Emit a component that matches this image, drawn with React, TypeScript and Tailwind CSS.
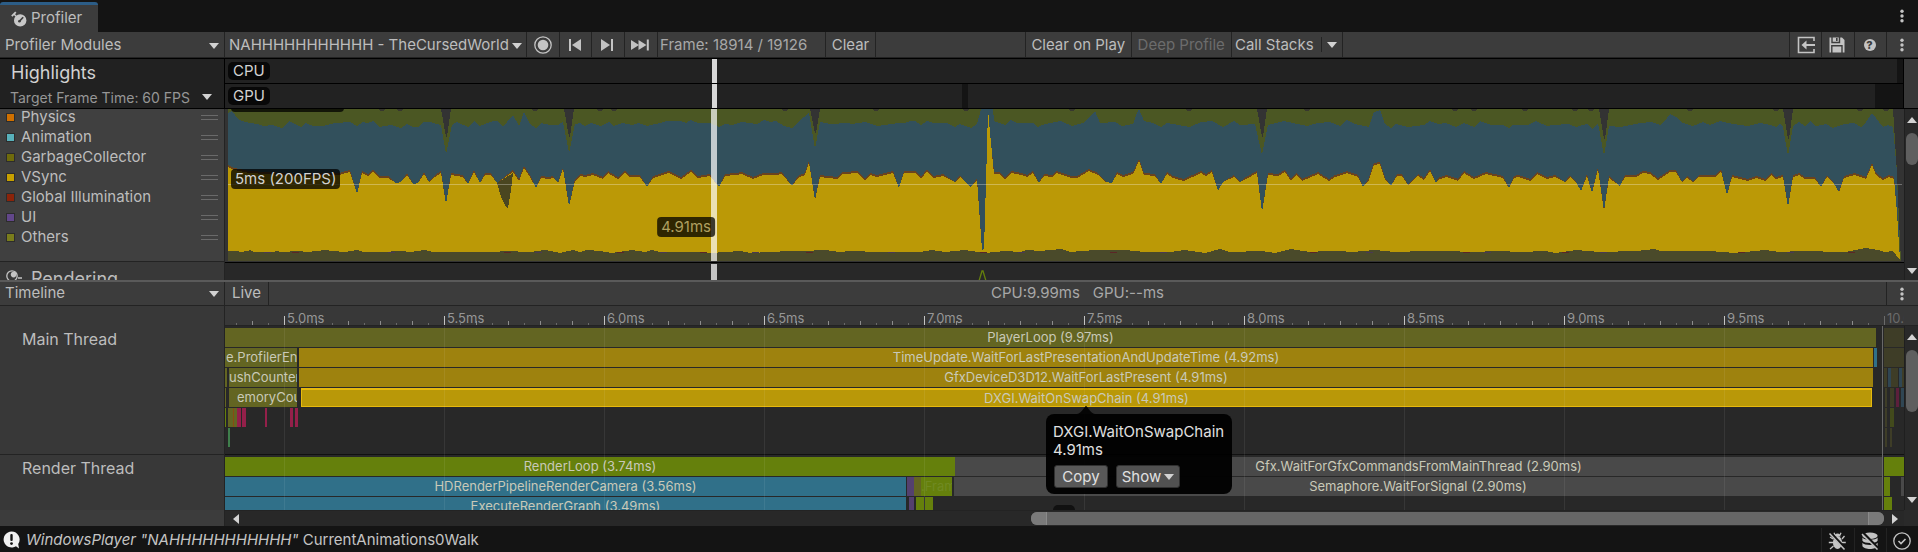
import { ReactNode } from "react";

// x,y pairs of the stacked chart, in chart units
const RENDER_LINE =
  "228,113 232,111 239,120 245,122 257,124 263,126 272,125 282,128 289,121 301,127 306,123 313,126 323,126 335,123 350,122 357,126 363,122 367,123 373,121 379,127 391,125 401,128 407,124 413,127 419,127 423,122 430,122 441,125 446,154 452,125 457,122 468,127 474,121 480,126 493,121 497,121 503,126 507,122 513,115 519,126 524,112 530,124 536,128 541,123 550,125 558,125 563,122 569,153 575,124 580,123 585,126 591,123 601,126 609,122 613,126 623,123 632,125 638,123 647,126 660,123 667,121 680,121 686,123 691,120 698,123 710,123 719,127 725,124 732,125 742,122 757,124 764,120 770,122 776,121 784,126 792,128 798,122 809,113 815,149 820,122 830,124 847,123 852,124 865,122 877,126 892,124 898,123 905,123 910,121 915,121 921,125 927,121 933,123 947,123 955,127 960,124 971,128 977,124 981,109 993,109 994,121 1005,125 1011,120 1017,123 1033,123 1038,127 1045,124 1061,121 1072,126 1083,123 1095,111 1100,123 1115,122 1122,126 1133,124 1137,113 1139,109 1144,121 1153,123 1161,127 1167,123 1190,127 1201,122 1212,121 1223,127 1234,121 1240,125 1255,124 1262,155 1268,125 1284,121 1307,126 1318,123 1330,122 1340,126 1347,120 1355,124 1369,127 1374,112 1380,110 1385,124 1391,128 1396,124 1408,127 1424,125 1430,121 1438,124 1446,123 1456,127 1464,123 1474,127 1480,121 1491,125 1503,125 1509,128 1513,125 1528,125 1536,121 1547,126 1553,125 1569,124 1576,127 1587,124 1592,129 1598,123 1604,156 1609,126 1620,127 1640,123 1651,122 1660,125 1665,121 1670,114 1676,117 1683,123 1693,126 1703,122 1710,125 1720,121 1733,124 1748,126 1760,123 1771,125 1776,127 1780,124 1783,127 1788,156 1793,126 1799,122 1805,126 1810,121 1816,126 1826,124 1833,128 1844,124 1854,123 1861,127 1866,122 1872,113 1883,127 1888,125 1893,127 1897,173 1899,240 1900,260";

const VSYNC_LINE =
  "228,167 234,170 250,173 300,176 339,175 350,172 357,194 362,173 368,176 373,172 379,178 388,178 396,183 401,182 407,175 413,184 418,183 424,174 429,182 435,177 441,173 446,204 451,175 463,177 468,184 474,172 480,183 485,175 491,175 497,183 513,172 519,181 524,168 530,177 536,188 541,178 548,179 553,178 558,183 563,169 569,206 575,181 580,176 585,177 593,175 603,179 608,173 618,179 625,173 630,177 640,177 647,187 653,178 669,173 681,179 691,172 698,178 710,176 719,187 725,176 735,175 742,174 753,179 763,175 775,175 782,174 792,186 798,178 805,175 809,163 815,200 820,177 837,179 843,174 858,173 865,181 870,175 877,177 893,173 899,188 904,173 915,173 921,179 927,171 933,178 943,176 955,182 960,177 967,184 971,187 977,180 982,250 984,249 987,147 988,109 990,133 994,174 999,174 1005,180 1011,173 1022,175 1027,177 1033,173 1039,183 1044,176 1052,177 1056,173 1072,178 1077,178 1089,171 1098,175 1106,182 1112,183 1117,174 1123,177 1133,174 1139,161 1144,175 1155,176 1161,184 1167,174 1173,178 1184,181 1201,173 1206,176 1212,172 1218,191 1223,182 1234,177 1240,182 1246,179 1257,173 1262,212 1268,175 1278,176 1285,172 1291,181 1296,175 1302,181 1318,174 1329,181 1335,177 1347,173 1358,177 1363,187 1369,180 1374,165 1380,164 1385,180 1391,186 1397,176 1402,176 1408,185 1418,176 1424,180 1430,171 1436,183 1438,180 1446,177 1458,181 1464,173 1474,179 1486,174 1503,178 1509,188 1514,178 1518,177 1530,181 1537,174 1547,179 1555,177 1565,182 1570,177 1576,182 1581,191 1587,176 1592,193 1598,169 1604,211 1609,178 1620,186 1625,177 1636,177 1643,173 1650,174 1658,180 1670,172 1676,172 1682,182 1687,178 1693,182 1699,177 1715,177 1721,171 1727,195 1732,177 1748,181 1756,178 1766,181 1771,175 1776,179 1783,177 1788,207 1793,177 1799,175 1805,179 1815,179 1821,187 1827,177 1833,182 1839,192 1844,178 1855,175 1866,179 1872,165 1876,175 1883,180 1889,177 1894,179 1897,213 1900,260";

const OTHERS_LINE =
  "228,251 237,251 240,252 247,251 250,250 254,252 273,252 276,251 282,252 298,251 308,252 325,250 333,251 345,252 357,250 363,252 380,252 402,251 410,252 425,250 433,252 447,252 480,252 495,252 505,251 530,252 545,250 560,253 573,250 580,252 587,250 600,251 612,253 632,250 645,252 652,250 660,252 690,252 710,253 740,251 750,253 790,251 803,251 825,250 840,252 850,251 880,252 920,252 932,250 945,252 965,250 985,253 1005,251 1020,252 1027,250 1040,251 1061,249 1070,252 1095,250 1105,250 1125,250 1145,252 1170,252 1185,250 1205,253 1220,249 1230,252 1262,251 1275,253 1291,249 1310,252 1325,251 1340,251 1352,252 1375,250 1395,252 1424,251 1450,251 1470,252 1500,251 1520,252 1546,251 1555,253 1576,250 1600,252 1636,251 1654,249 1660,251 1710,251 1735,253 1765,250 1780,252 1800,251 1845,252 1866,248 1878,250 1884,252 1893,251 1896,255 1900,260";

const SPIKES = [
  [446, 137],
  [569, 137],
  [815, 133],
  [1262, 137],
  [1604, 139],
  [1788, 139],
];
const NICKS = [382, 400, 535, 600, 614, 785, 876, 966, 1072, 1189, 1307, 1455, 1474, 1525, 1575, 1591, 1690, 1776, 1860, 1886];
const SPECKS = [264, 292, 388, 504, 535, 617, 660, 700, 752, 806, 888, 980, 1018, 1110, 1160, 1310, 1366, 1463, 1484, 1562, 1600, 1738, 1787, 1848];

const BROWN_LINE = VSYNC_LINE.split(" ")
  .map((p) => {
    const [x, y] = p.split(",").map(Number);
    return `${x},${y < 182 && y > 160 ? y - 2 : y}`;
  })
  .join(" ");

const legend = [
  { name: "Physics", color: "bg-[#cf7000]" },
  { name: "Animation", color: "bg-[#58b0ba]" },
  { name: "GarbageCollector", color: "bg-[#6f6b0c]" },
  { name: "VSync", color: "bg-[#c7a000]" },
  { name: "Global Illumination", color: "bg-[#8b240a]" },
  { name: "UI", color: "bg-[#62478a]" },
  { name: "Others", color: "bg-[#7a7d1c]" },
];

// visible part of the time axis: 1679 units wide, 320 units per ms
const VIEW = 1679;

type Sample = { from: number; to: number; color: string; label?: string; text?: string };

const OLIVE = "bg-[#636522]";
const GOLD = "bg-[#9e820e]";
const GREEN = "bg-[#65800c]";
const BLUE = "bg-[#307089]";
const PINK = "bg-[#94204a]";
const DIM = "bg-[#3e3d27]";
const DIM_BLUE = "bg-[#304653]";
const GREY = "bg-[#494949]";
const PURPLE = "bg-[#54406e]";

const mainThread: Sample[][] = [
  [
    { from: 0, to: 1651, color: OLIVE, label: "PlayerLoop (9.97ms)" },
    { from: 1659, to: 1679, color: DIM },
  ],
  [
    { from: 0, to: 72, color: OLIVE, label: "e.ProfilerEnd", text: "justify-start pl-px" },
    { from: 74, to: 1648, color: GOLD, label: "TimeUpdate.WaitForLastPresentationAndUpdateTime (4.92ms)" },
    { from: 1649, to: 1652, color: BLUE },
    { from: 1659, to: 1679, color: DIM },
  ],
  [
    { from: 0, to: 2, color: OLIVE },
    { from: 4, to: 72, color: OLIVE, label: "ushCounters", text: "justify-start" },
    { from: 74, to: 1648, color: GOLD, label: "GfxDeviceD3D12.WaitForLastPresent (4.91ms)" },
    { from: 1659, to: 1662, color: DIM },
    { from: 1663, to: 1666, color: DIM_BLUE },
    { from: 1666, to: 1673, color: DIM },
    { from: 1674, to: 1677, color: DIM_BLUE },
    { from: 1677, to: 1679, color: DIM },
  ],
  [
    { from: 0, to: 1, color: OLIVE },
    { from: 4, to: 72, color: OLIVE, label: "emoryCou", text: "justify-start pl-2" },
    {
      from: 76,
      to: 1647,
      color: "bg-[#b99808] border border-t-2 border-[#e6b90e]",
      label: "DXGI.WaitOnSwapChain (4.91ms)",
    },
    { from: 1660, to: 1662, color: DIM },
    { from: 1665, to: 1669, color: DIM },
    { from: 1671, to: 1674, color: "bg-[#5c1f3b]" },
    { from: 1676, to: 1679, color: DIM_BLUE },
  ],
  [
    { from: 0, to: 1, color: GREEN },
    { from: 3, to: 8, color: OLIVE },
    { from: 8, to: 9, color: "bg-[#8a4a12]" },
    { from: 9, to: 12, color: OLIVE },
    { from: 12, to: 16, color: PINK },
    { from: 17, to: 21, color: PINK },
    { from: 40, to: 42, color: PINK },
    { from: 65, to: 68, color: PINK },
    { from: 70, to: 73, color: PINK },
    { from: 1660, to: 1662, color: DIM },
    { from: 1665, to: 1669, color: "bg-[#424a1c]" },
  ],
  [
    { from: 3, to: 5, color: "bg-[#3f7f4c]" },
    { from: 1660, to: 1662, color: DIM },
    { from: 1665, to: 1667, color: DIM },
  ],
];

const renderThread: Sample[][] = [
  [
    { from: 0, to: 730, color: GREEN, label: "RenderLoop (3.74ms)" },
    { from: 730, to: 1657, color: GREY, label: "Gfx.WaitForGfxCommandsFromMainThread (2.90ms)" },
    { from: 1659, to: 1679, color: GREEN },
  ],
  [
    { from: 0, to: 681, color: BLUE, label: "HDRenderPipelineRenderCamera (3.56ms)" },
    { from: 682, to: 689, color: PURPLE },
    { from: 689, to: 696, color: OLIVE },
    { from: 696, to: 727, color: GREEN, label: ".Fram", text: "justify-start text-[#708a22]" },
    { from: 729, to: 1657, color: GREY, label: "Semaphore.WaitForSignal (2.90ms)" },
    { from: 1659, to: 1665, color: GREEN },
    { from: 1676, to: 1679, color: GREY },
  ],
  [
    { from: 0, to: 681, color: BLUE, label: "ExecuteRenderGraph (3.49ms)" },
    { from: 684, to: 689, color: PURPLE },
    { from: 691, to: 699, color: GREEN },
    { from: 700, to: 708, color: GREEN },
    { from: 1659, to: 1667, color: GREEN },
  ],
];

const majors = [5, 5.5, 6, 6.5, 7, 7.5, 8, 8.5, 9, 9.5, 10];
const toUnits = (ms: number) => 59 + (ms - 5) * 320;
const pct = (units: number) => `${(units / VIEW) * 100}%`;

function Triangle({ dir = "down", className = "" }: { dir?: "down" | "up" | "left" | "right"; className?: string }) {
  const points = {
    down: "0,2 10,2 5,8",
    up: "0,8 10,8 5,2",
    left: "8,0 8,10 2,5",
    right: "2,0 2,10 8,5",
  };
  return (
    <svg viewBox="0 0 10 10" className={`size-[10px] shrink-0 fill-[#d2d2d2] ${className}`} aria-hidden="true">
      <polygon points={points[dir]} />
    </svg>
  );
}

function Dots() {
  return (
    <svg viewBox="0 0 4 14" className="w-1 h-[14px] fill-[#c4c4c4]" aria-hidden="true">
      <circle cx="2" cy="2.2" r="1.7" />
      <circle cx="2" cy="7" r="1.7" />
      <circle cx="2" cy="11.8" r="1.7" />
    </svg>
  );
}

function Dropdown({ label, value, className = "", arrow = "right-2" }: { label: string; value: string; className?: string; arrow?: string }) {
  return (
    <div className={`relative flex items-center ${className}`}>
      <select aria-label={label} className="appearance-none bg-transparent w-full h-full outline-none">
        <option>{value}</option>
      </select>
      <Triangle className={`absolute pointer-events-none ${arrow}`} />
    </div>
  );
}

function ToolButton({ label, children, className = "w-8" }: { label: string; children: ReactNode; className?: string }) {
  return (
    <button type="button" aria-label={label} className={`flex items-center justify-center shrink-0 border-[#232323] ${className}`}>
      {children}
    </button>
  );
}

function TabBar() {
  return (
    <div className="flex justify-between items-stretch h-8 bg-[#141414]">
      <button type="button" className="mt-[2px] w-[98px] bg-[#3c3c3c] border-t-[3px] border-[#2c5d87] rounded-t-[3px] flex items-center pl-[11px] gap-1 text-[15px]">
        <svg viewBox="0 0 16 16" className="size-4" aria-hidden="true">
          <circle cx="9.2" cy="9.4" r="6.2" fill="#c8c8c8" />
          <path d="M8.3 10.4 L12.2 6.2" stroke="#3c3c3c" strokeWidth="1.6" />
          <circle cx="8.4" cy="10.2" r="1.3" fill="#3c3c3c" />
          <path d="M0.8 5.2 L4.8 1.2" stroke="#c8c8c8" strokeWidth="1.8" />
          <path d="M3 3 L5 5.2" stroke="#c8c8c8" strokeWidth="1.4" />
        </svg>
        Profiler
      </button>
      <button type="button" aria-label="Window menu" className="w-8 flex items-center justify-center">
        <Dots />
      </button>
    </div>
  );
}

function Toolbar() {
  return (
    <div className="flex items-stretch h-[26px] bg-[#3c3c3c] border-b border-[#232323] text-[15px]">
      <Dropdown label="Profiler Modules" value="Profiler Modules" className="w-[225px] shrink-0 pl-[5px] pt-[2px] border-r border-[#232323]" arrow="right-[5px]" />
      <Dropdown label="Connected player" value="NAHHHHHHHHHHH - TheCursedWorld" className="w-[302px] shrink-0 pl-1 pt-[2px] border-r border-[#232323]" arrow="right-1" />
      <ToolButton label="Record" className="w-[33px] border-r">
        <svg viewBox="0 0 18 18" className="size-[18px]" aria-hidden="true">
          <circle cx="9" cy="9" r="8.2" fill="none" stroke="#c4c4c4" strokeWidth="1.3" />
          <circle cx="9" cy="9" r="5.3" fill="#c4c4c4" />
        </svg>
      </ToolButton>
      <ToolButton label="Previous frame" className="w-8 pr-px border-r">
        <svg viewBox="0 0 14 14" className="size-[14px] fill-[#c4c4c4]" aria-hidden="true">
          <rect x="1" y="1" width="2" height="12" />
          <polygon points="4,7 13,1 13,13" />
        </svg>
      </ToolButton>
      <ToolButton label="Next frame" className="w-[33px] pr-[2px] border-r">
        <svg viewBox="0 0 14 14" className="size-[14px] fill-[#c4c4c4]" aria-hidden="true">
          <rect x="11" y="1" width="2" height="12" />
          <polygon points="10,7 1,1 1,13" />
        </svg>
      </ToolButton>
      <ToolButton label="Current frame" className="w-[33px] pr-[2px] border-r">
        <svg viewBox="0 0 20 14" className="w-5 h-[14px] fill-[#c4c4c4]" aria-hidden="true">
          <polygon points="1,2 9,7 1,12" />
          <polygon points="8.5,2 16.5,7 8.5,12" />
          <rect x="16.8" y="1.5" width="2" height="11" />
        </svg>
      </ToolButton>
      <span className="w-[168px] shrink-0 pl-[2px] pt-[2px] flex items-center border-r border-[#232323] text-[#a8a8a8]">Frame: 18914 / 19126</span>
      <button type="button" className="w-[50px] shrink-0 pt-[2px] border-r border-[#232323]">Clear</button>
      <div className="flex-1 border-r border-[#232323]" />
      <button type="button" className="w-[106px] shrink-0 pt-[2px] border-r border-[#232323]">Clear on Play</button>
      <button type="button" disabled className="w-[100px] shrink-0 pt-[2px] border-r border-[#232323] text-[#6c6c6c]">Deep Profile</button>
      <div className="w-[111px] shrink-0 flex items-center border-r border-[#232323]">
        <button type="button" className="w-[90px] h-[15px] leading-4 pr-1 border-r border-[#232323]">Call Stacks</button>
        <button type="button" aria-label="Call stack options" className="flex-1 flex justify-center">
          <Triangle />
        </button>
      </div>
      <div className="flex-[3]" />
      <ToolButton label="Load" className="w-8 border-l">
        <svg viewBox="0 0 18 18" className="size-[18px]" fill="none" stroke="#c4c4c4" strokeWidth="1.6" aria-hidden="true">
          <path d="M17 5 V1.5 H1.5 V16.5 H17 V13" />
          <path d="M18 9 H7" strokeWidth="2" />
          <polygon points="4.5,9 9.5,4.5 9.5,13.5" fill="#c4c4c4" stroke="none" />
        </svg>
      </ToolButton>
      <ToolButton label="Save" className="w-[33px] pr-[2px] border-l">
        <svg viewBox="0 0 16 16" className="size-4" aria-hidden="true">
          <path d="M0.5 0.5 H13 L15.5 3 V15.5 H0.5 Z" fill="#c4c4c4" />
          <path d="M3 0 V5.5 H10.5 V0 M2.8 16 V8.8 H13 V16" fill="none" stroke="#3c3c3c" strokeWidth="1.4" />
          <rect x="7" y="1" width="1.6" height="3" fill="#3c3c3c" />
        </svg>
      </ToolButton>
      <ToolButton label="Help" className="w-8 pr-[2px] border-l">
        <span className="size-3 rounded-full bg-[#c4c4c4] text-[#3c3c3c] text-[11px] leading-3 font-extrabold">?</span>
      </ToolButton>
      <ToolButton label="More options" className="w-8 pr-[2px] border-l">
        <Dots />
      </ToolButton>
    </div>
  );
}

function Highlights() {
  return (
    <div className="flex h-[51px] border-y border-black bg-[#383838]">
      <div className="w-[225px] shrink-0 bg-[#212121] border-r border-black">
        <h2 className="pl-[11px] h-[26px] leading-7 text-[18px] text-[#d2d2d2]">Highlights</h2>
        <Dropdown label="Target frame time" value="Target Frame Time: 60 FPS" className="h-[22px] pl-[10px] pt-[2px] text-[14px] text-[#969696]" arrow="right-3" />
      </div>
      <div className="relative flex-1 flex flex-col border-r border-black text-[15px] leading-[18px] text-[#d2d2d2]">
        <div className="h-[25px] flex items-center justify-between border-b border-black bg-[#222222]">
          <span className="ml-[3px] px-[5px] rounded-[5px] bg-[#080808]">CPU</span>
          <span className="w-[6px] h-full bg-[#141414]" />
        </div>
        <div className="h-6 flex items-center bg-[#222222]">
          <span className="ml-[3px] px-[5px] rounded-[5px] bg-[#080808]">GPU</span>
          <span className="flex-[139]" />
          <span className="w-[6px] h-full bg-[#141414]" />
          <span className="flex-[182]" />
          <span className="w-7 h-full bg-[#141414]" />
        </div>
        <span className="absolute top-0 h-6 w-[5px] bg-[#d8d8d8]" style={{ left: pct(487) }} />
        <span className="absolute bottom-0 h-6 w-[5px] bg-[#d8d8d8]" style={{ left: pct(487) }} />
      </div>
      <div className="w-[14px]" />
    </div>
  );
}

function ModuleChart() {
  return (
    <svg viewBox="225 109 1679 153" preserveAspectRatio="none" className="block w-full h-[153px]" shapeRendering="crispEdges" aria-hidden="true">
      <rect x="225" y="109" width="1679" height="153" fill="#333333" />
      <polygon points="228,109 1893,109 1897,173 1899,220 1901,261 228,261" fill="#4b5723" />
      {SPIKES.map(([x, y]) => (
        <polygon key={x} points={`${x - 5},109 ${x + 5},109 ${x + 1},${y} ${x},${y}`} fill="#333333" />
      ))}
      {NICKS.map((x) => (
        <polygon key={x} points={`${x - 4},109 ${x + 4},109 ${x + 1},111 ${x - 1},111`} fill="#38382e" />
      ))}
      <polygon points={`228,261 ${RENDER_LINE} 1900,261`} fill="#32505c" />
      <polygon points={`228,261 ${BROWN_LINE} 1900,261`} fill="#6b431e" />
      <polygon points={`228,261 ${VSYNC_LINE} 1900,261`} fill="#bb9906" />
      <polygon points="497,183 513,173 511,190 508,208 506,207 501,197" fill="#4a4620" />
      <polygon points={`228,261 ${OTHERS_LINE} 1901,261`} fill="#4a4a2a" />
      {SPECKS.map((x, i) => (
        <rect key={x} x={x} y="252" width="7" height="1" fill={i % 2 ? "#5c2626" : "#4a3a52"} />
      ))}
      <rect x="228" y="184" width="1674" height="1" fill="#ffffff" opacity="0.3" />
    </svg>
  );
}

function VScroll({ thumb, className = "" }: { thumb: string; className?: string }) {
  return (
    <div className={`w-[14px] shrink-0 flex flex-col items-end bg-[#292929] border-l border-[#1f1f1f] overflow-hidden ${className}`}>
      <button type="button" aria-label="Scroll up" className="pr-px">
        <Triangle dir="up" className="block" />
      </button>
      <span className={`mt-2 w-3 rounded-[6px] bg-[#5f5f5f] ${thumb}`} />
      <button type="button" aria-label="Scroll down" className="mt-auto pr-px">
        <Triangle className="block" />
      </button>
    </div>
  );
}

function Modules() {
  return (
    <div className="flex h-[171px] overflow-hidden">
      <div className="w-[225px] shrink-0 border-r border-[#232323] bg-[#404040] flex flex-col">
        <ul className="-mt-[2px] h-[155px] shrink-0 text-[15px] border-b border-[#232323]">
          {legend.map((item) => (
            <li key={item.name} className="h-5 flex items-center pl-[6px] pr-[6px]">
              <span className={`size-[9px] border border-[#2c2c2c] ${item.color}`} />
              <span className="ml-[6px] flex-1">{item.name}</span>
              <span className="w-[17px] h-[5px] border-y border-[#6a6a6a]" />
            </li>
          ))}
        </ul>
        <div className="h-8 shrink-0 bg-[#383838] flex items-center pl-[6px] gap-[9px] text-[18px]">
          <svg viewBox="0 0 16 16" className="size-4" aria-hidden="true">
            <circle cx="6" cy="6" r="5.2" fill="none" stroke="#c4c4c4" strokeWidth="1.3" />
            <circle cx="7.6" cy="4.6" r="2.8" fill="#c4c4c4" />
            <path d="M12 8 H16 M13 11 H15" stroke="#c4c4c4" strokeWidth="1.4" />
          </svg>
          Rendering
        </div>
      </div>
      <div className="relative flex-1 bg-[#282828] text-[15px] leading-5">
        <div className="border-b border-black">
          <ModuleChart />
        </div>
        <svg viewBox="0 0 1679 17" preserveAspectRatio="none" className="block w-full h-[17px]" aria-hidden="true">
          <path d="M754 18 L757 8 L758 8 L761 18" fill="none" stroke="#65800c" strokeWidth="1.3" />
        </svg>
        <span className="absolute left-[6px] -top-[17px] px-1 rounded-[4px] bg-black/75 text-[#d2d2d2]">10ms (100FPS)</span>
        <span className="absolute left-[6px] top-[60px] px-1 rounded-[4px] bg-black/75 text-[#d2d2d2]">5ms (200FPS)</span>
        <span className="absolute top-0 h-[152px] w-[6px] bg-white/70" style={{ left: pct(486) }} />
        <span className="absolute bottom-0 h-4 w-[6px] bg-[#c4c4c4]" style={{ left: pct(486) }} />
        <span className="absolute top-[108px] -translate-x-full px-1 rounded-[4px] bg-black/75 text-[#b0a060]" style={{ left: pct(490) }}>
          4.91ms
        </span>
      </div>
      <VScroll thumb="h-8" className="pt-[6px] pb-1" />
    </div>
  );
}

function Track({ rows }: { rows: Sample[][] }) {
  return (
    <>
      {rows.map((row, r) => (
        <div key={r} className="flex h-5 text-[13px] leading-[19px] text-[#c9c9b8]">
          {row.map((s, i) => (
            <span
              key={s.from}
              className={`h-[19px] shrink-0 flex items-center overflow-hidden whitespace-nowrap ${s.color} ${s.text ?? "justify-center"}`}
              style={{ marginLeft: pct(s.from - (i ? row[i - 1].to : 0)), width: pct(s.to - s.from) }}
            >
              {s.label}
            </span>
          ))}
        </div>
      ))}
    </>
  );
}

function Ruler() {
  const ticks = Array.from({ length: 104 }, (_, i) => ({ x: 11 + i * 16, n: i - 3 }));
  return (
    <div className="relative h-5 bg-[#383838] border-b border-[#232323] overflow-hidden">
      <svg viewBox="0 0 1679 19" preserveAspectRatio="none" className="block w-full h-[19px]" shapeRendering="crispEdges" aria-hidden="true">
        {ticks.map(({ x, n }) =>
          n % 10 === 0 ? (
            <rect key={x} x={x} y="10" width="1" height="9" fill={n < 100 ? "#c4c4c4" : "#6a6a6a"} />
          ) : (
            <rect key={x} x={x} y={n % 2 ? 17 : 15} width="1" height="5" fill={n % 2 ? "#6a6a6a" : "#8c8c8c"} />
          )
        )}
      </svg>
      {majors.map((ms) => (
        <span
          key={ms}
          className={`absolute top-0 pl-[3px] text-[13px] leading-6 ${ms === 10 ? "text-[#6a6a6a]" : "text-[#969696]"}`}
          style={{ left: pct(toUnits(ms)) }}
        >
          {ms.toFixed(1)}ms
        </span>
      ))}
    </div>
  );
}

function SampleTooltip() {
  return (
    <div
      className="absolute top-[88px] -translate-x-[40px] w-[186px] h-20 rounded-[8px] bg-black/95 pl-[7px] pt-[9px] text-[15px] leading-[18px] text-[#e0e0e0]"
      style={{ left: pct(861) }}
    >
      <svg viewBox="0 0 18 8" className="absolute -top-2 left-[31px] w-[18px] h-2 fill-[#050505]" aria-hidden="true">
        <path d="M9 0 C11 1 13 7 18 8 H0 C5 7 7 1 9 0 Z" />
      </svg>
      <p>DXGI.WaitOnSwapChain</p>
      <p>4.91ms</p>
      <div className="mt-[6px] flex gap-2 ml-px">
        <button type="button" className="w-[54px] h-[23px] rounded-[3px] bg-[#585858] border border-[#303030]">Copy</button>
        <button type="button" className="w-[64px] h-[23px] rounded-[3px] bg-[#515151] border border-[#303030] flex items-center justify-center gap-[3px]">
          Show
          <Triangle />
        </button>
      </div>
    </div>
  );
}

function Timeline() {
  return (
    <section className="bg-[#383838]">
      <div className="flex h-6 bg-[#3c3c3c] border-b border-[#232323] text-[15px]">
        <Dropdown label="View" value="Timeline" className="w-[225px] shrink-0 pl-[5px] border-r border-[#232323]" arrow="right-[5px]" />
        <button type="button" className="w-11 shrink-0 border-r border-[#232323]">Live</button>
        <div className="flex-1 flex items-center justify-center gap-[13px] text-[#a8a8a8]">
          <span>CPU:9.99ms</span>
          <span>GPU:--ms</span>
        </div>
        <ToolButton label="Timeline options" className="w-8 pr-[2px] border-l">
          <Dots />
        </ToolButton>
      </div>
      <div className="flex">
        <div className="w-[225px] shrink-0 border-r border-[#232323] text-[16px] text-[#bdbdbd]">
          <div className="h-[149px] pt-[21px] pl-[22px] border-b border-[#232323]">Main Thread</div>
          <div className="h-[55px] pt-px pl-[22px]">Render Thread</div>
          <div className="h-4 bg-[#3c3c3c]" />
        </div>
        <div className="flex-1 min-w-0">
          <Ruler />
          <div className="relative h-[184px] bg-[#282828]">
            <div className="h-[184px] overflow-hidden">
              <div className="h-[129px] pt-[2px] border-b border-[#111111]">
                <Track rows={mainThread} />
              </div>
              <div className="pt-[2px]">
                <Track rows={renderThread} />
              </div>
            </div>
            <svg viewBox="0 0 1679 184" preserveAspectRatio="none" className="absolute inset-0 w-full h-full pointer-events-none" shapeRendering="crispEdges" aria-hidden="true">
              {majors.slice(0, -1).map((ms) => (
                <rect key={ms} x={toUnits(ms)} y="0" width="1" height="184" fill="#ffffff" opacity="0.07" />
              ))}
              <rect x="1657" y="0" width="1" height="184" fill="#686868" />
            </svg>
            <span className="absolute bottom-0 w-[22px] h-[5px] rounded-t-[5px] bg-[#111111]" style={{ left: pct(828) }} />
            <SampleTooltip />
          </div>
          <div className="h-4 flex items-center bg-[#282828] border-t border-[#232323] pl-[6px] pr-1">
            <button type="button" aria-label="Scroll left">
              <Triangle dir="left" className="block" />
            </button>
            <div className="flex-1 ml-[3px] mr-[6px] h-[13px] flex justify-end">
              <div className="w-[52%] flex rounded-[6px] bg-[#666666] overflow-hidden">
                <span className="w-4 bg-[#7a7a7a] border-r border-[#8a8a8a]" />
                <span className="w-4 ml-auto bg-[#7a7a7a] border-l border-[#8a8a8a]" />
              </div>
            </div>
            <button type="button" aria-label="Scroll right">
              <Triangle dir="right" className="block" />
            </button>
          </div>
        </div>
        <div className="w-[14px] shrink-0 flex flex-col">
          <div className="h-5 border-b border-[#232323]" />
          <VScroll thumb="h-[62px]" className="h-[184px] pt-[6px] pb-[5px]" />
          <div className="h-4 bg-[#2a2a2a]" />
        </div>
      </div>
    </section>
  );
}

function StatusBar() {
  return (
    <footer className="flex h-[26px] bg-[#141414] text-[15px] text-[#c4c4c4]">
      <p className="flex-1 flex items-center pt-[2px] pl-[3px] gap-[6px]">
        <svg viewBox="0 0 17 18" className="w-[17px] h-[18px]" aria-hidden="true">
          <path d="M8.5 0.5 A8 8 0 1 0 13 15.2 L16 17.5 L15.2 13 A8 8 0 0 0 8.5 0.5 Z" fill="#f0f0f0" />
          <rect x="7.3" y="3" width="2.4" height="7" rx="1" fill="#141414" />
          <circle cx="8.5" cy="12.6" r="1.4" fill="#141414" />
        </svg>
        <span>
          <em>WindowsPlayer "NAHHHHHHHHHHH"</em> CurrentAnimations0Walk
        </span>
      </p>
      <ToolButton label="Debugger" className="w-[33px] pr-[2px] pt-px border-l mt-[2px]">
        <svg viewBox="0 0 18 18" className="size-[18px]" aria-hidden="true">
          <ellipse cx="9.5" cy="10.5" rx="4.6" ry="6.5" fill="#c4c4c4" />
          <path d="M6.5 4.5 A3 3 0 0 1 12.5 4.5 Z" fill="#c4c4c4" />
          <path d="M5 7 L2 5 M5 10.5 H0.8 M5.5 14 L2 17 M14 7 L16.5 4 M14 10.5 H17.8 M13.5 14 L16.5 16.5 M7 3 L6 0.8 M12 3 L13 0.8" stroke="#c4c4c4" strokeWidth="1.3" />
          <path d="M2.5 1 L17.5 17" stroke="#141414" strokeWidth="3" />
          <path d="M1.5 1.5 L16.5 17.5" stroke="#c4c4c4" strokeWidth="1.5" />
        </svg>
      </ToolButton>
      <ToolButton label="Cache server" className="w-8 pr-[2px] pt-px border-l mt-[2px]">
        <svg viewBox="0 0 18 18" className="size-[18px]" aria-hidden="true">
          <ellipse cx="9" cy="3.8" rx="7.6" ry="3.2" fill="#c4c4c4" />
          <path d="M1.4 5.5 C3 8.5 15 8.5 16.6 5.5 V8.8 C15 11.8 3 11.8 1.4 8.8 Z" fill="#c4c4c4" />
          <path d="M1.4 10.8 C3 13.8 15 13.8 16.6 10.8 V14 C15 18 3 18 1.4 14 Z" fill="#c4c4c4" />
          <path d="M2.5 1.5 L17.5 17" stroke="#141414" strokeWidth="3" />
          <path d="M1 2 L16.5 17.5" stroke="#c4c4c4" strokeWidth="1.5" />
        </svg>
      </ToolButton>
      <ToolButton label="Background tasks" className="w-8 pr-[2px] pt-px border-l mt-[2px]">
        <svg viewBox="0 0 18 18" className="size-[18px]" fill="none" stroke="#c4c4c4" aria-hidden="true">
          <circle cx="9" cy="9" r="8.2" strokeWidth="1.3" />
          <path d="M5.5 9 L8 11.5 L12.5 7" strokeWidth="1.6" />
        </svg>
      </ToolButton>
    </footer>
  );
}

export default function App() {
  return (
    <div className="w-full bg-[#141414] font-[Inter,sans-serif] text-[#bdbdbd] select-none">
      <TabBar />
      <Toolbar />
      <Highlights />
      <Modules />
      <div className="h-[2px] bg-[#5a5a5a]" />
      <Timeline />
      <StatusBar />
    </div>
  );
}
